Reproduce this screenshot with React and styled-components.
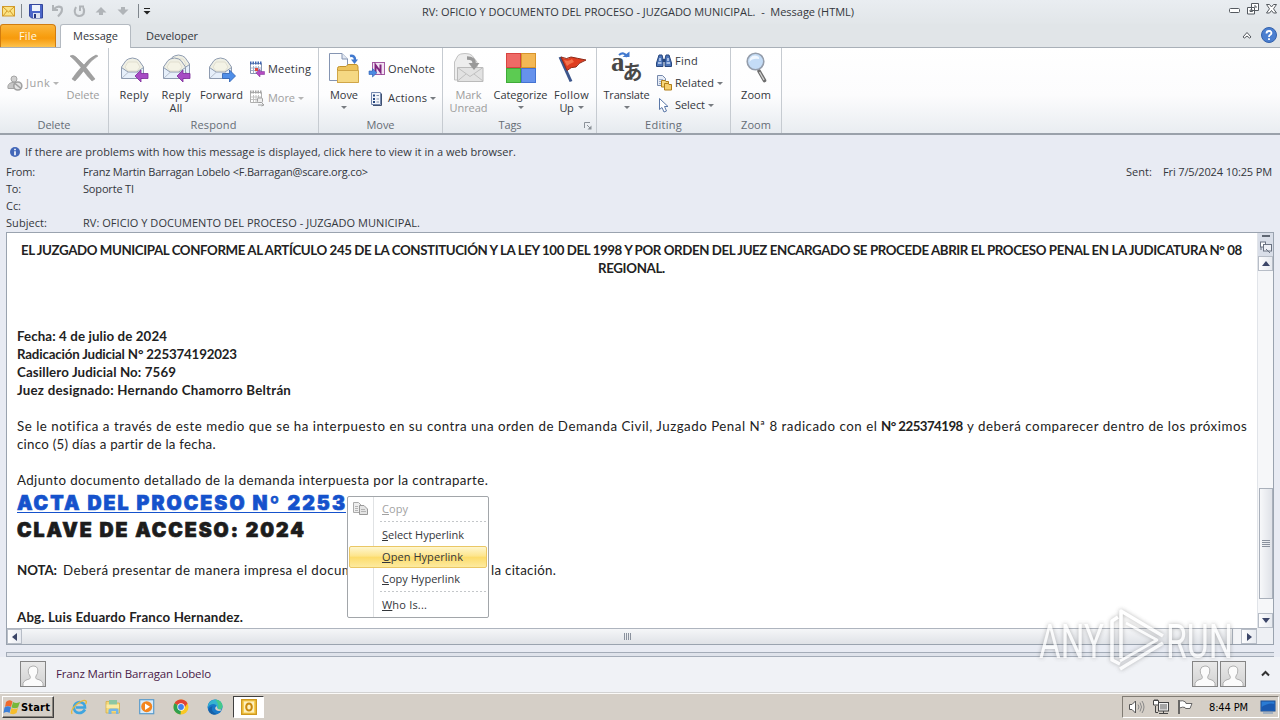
import React, { useLayoutEffect, useRef } from "react";
import styled, { createGlobalStyle } from "styled-components";

const Global = createGlobalStyle`
  * { box-sizing: border-box; }
  body { margin: 0; overflow: hidden; background: #e8ebf3; }
  body, button { font-family: "Open Sans", "Noto Sans", sans-serif; font-size: 11px; color: #34373c; }
  svg { display: block; flex: none; overflow: visible; }
`;

/* Text run whose tracking is computed so that it fills a given width */
const Run = styled.span`
  display: inline-block;
  flex: none;
  white-space: pre;
  width: ${(p) => p.$w}px;
  text-align: left;
`;
function Fit({ w, children }) {
  const ref = useRef(null);
  useLayoutEffect(() => {
    const el = ref.current;
    el.style.letterSpacing = "0px";
    const n = el.textContent.length - 0.5;
    const natural = el.getBoundingClientRect().width;
    el.style.letterSpacing = `${(w - natural) / n}px`;
  }, [w, children]);
  return (
    <Run $w={w}>
      <span ref={ref}>{children}</span>
    </Run>
  );
}

const Screen = styled.div`
  position: relative;
  width: 1280px;
  height: 720px;
  display: flex;
  flex-direction: column;
  overflow: hidden;
`;

/* ---------- title bar and tabs ---------- */
const TitleBar = styled.header`
  height: 24px;
  flex: none;
  display: grid;
  grid-template-columns: 422px 1fr auto;
  background: linear-gradient(#e9edf1, #e2e6e9);
  line-height: 23px;
`;
const QuickAccess = styled.div`
  display: flex;
  align-items: center;
  height: 22px;
  padding-left: 2px;
`;
const QuickIcon = styled.span`
  width: ${(p) => p.$w || 22}px;
`;
const Rule = styled.i`
  width: 1px;
  height: 14px;
  background: #7f868d;
  margin-right: ${(p) => p.$after}px;
`;
const WindowButtons = styled.div`
  display: flex;
  gap: 7px;
  height: 18px;
  align-items: center;
  padding-right: 3px;
`;
const TabRow = styled.nav`
  height: 24px;
  flex: none;
  display: flex;
  align-items: flex-end;
  background: #e1e5e8;
  border-bottom: 1px solid #a9b0b8;
`;
const FileTab = styled.div`
  width: 56px;
  height: 23px;
  border: 1px solid #d07c10;
  border-bottom: 0;
  border-radius: 3px 4px 0 0;
  background: linear-gradient(#fbb53c, #f8a115 45%, #f79a0c 60%, #fdc24c);
  color: #fff8e0;
  line-height: 21px;
  padding-left: 18px;
`;
const ActiveTab = styled.div`
  height: 24px;
  width: 71px;
  margin: 0 15px -1px 4px;
  padding-left: 12px;
  background: #fff;
  border: 1px solid #b4bac1;
  border-bottom: 0;
  border-radius: 3px 3px 0 0;
  line-height: 21px;
`;
const PlainTab = styled.div`
  line-height: 22px;
`;
const TabTools = styled.div`
  margin-left: auto;
  display: flex;
  align-items: center;
  gap: 9px;
  height: 24px;
  padding-right: 3px;
`;

/* ---------- ribbon ---------- */
const Ribbon = styled.section`
  height: 87px;
  flex: none;
  display: flex;
  background: linear-gradient(#fff, #fcfcfd 55%, #e9edf1);
  border-bottom: 2px solid #9aa1aa;
`;
const Group = styled.div`
  width: ${(p) => p.$w}px;
  display: flex;
  flex-direction: column;
  border-right: 1px solid #c6cbd1;
  background: linear-gradient(#fff, #fdfdfe 55%, #e6eaef);
`;
const Tools = styled.div`
  flex: 1;
  display: flex;
  padding-left: ${(p) => p.$pad || 0}px;
`;
const GroupLabel = styled.div`
  position: relative;
  height: 16px;
  line-height: 16px;
  color: #656c75;
  display: flex;
  justify-content: center;
`;
const Launcher = styled.svg`
  position: absolute;
  right: 4px;
  top: 5px;
`;
const Large = styled.div`
  width: ${(p) => p.$w}px;
  flex: none;
  display: flex;
  flex-direction: column;
  align-items: center;
  padding-top: 4px;
  line-height: 13px;
  color: ${(p) => (p.$off ? "#9c9c9c" : "#34373c")};
  & > svg { margin-bottom: 4px; }
`;
const LineTwo = styled.span`
  display: flex;
  align-items: center;
  gap: 4px;
  height: 13px;
`;
const SmallColumn = styled.div`
  display: flex;
  flex-direction: column;
  padding-top: ${(p) => p.$top}px;
  gap: ${(p) => p.$gap}px;
`;
const Small = styled.div`
  display: flex;
  align-items: center;
  height: 16px;
  line-height: 16px;
  gap: ${(p) => p.$gap || 3}px;
  color: ${(p) => (p.$off ? "#a0a0a0" : "#34373c")};
`;
const Arrow = styled.i`
  width: 0;
  height: 0;
  border: 3px solid transparent;
  border-bottom: 0;
  border-top-color: ${(p) => (p.$off ? "#b5b5b5" : "#777b80")};
`;

/* ---------- message header ---------- */
const Header = styled.section`
  height: 97px;
  flex: none;
  padding: 8px 8px 0 6px;
  background: #e8ebf3;
  line-height: 17px;
`;
const InfoBar = styled.div`
  display: flex;
  align-items: center;
  height: 17px;
  padding-left: 4px;
  gap: 5px;
  margin-bottom: 3px;
`;
const Field = styled.div`
  display: flex;
  height: 17px;
`;
const FieldName = styled.span`
  width: 77px;
`;
const Sent = styled.div`
  margin-left: auto;
  display: flex;
  gap: 11px;
`;

/* ---------- reading area ---------- */
const Frame = styled.main`
  position: relative;
  height: 413px;
  flex: none;
  margin: 0 6px;
  border: 1px solid #9aa3af;
  background: #fff;
  display: grid;
  grid-template-columns: 1fr 16px;
  grid-template-rows: 1fr 16px;
`;
const Letter = styled.article`
  padding: 8px 0 0 10px;
  font-family: Lato, "Open Sans", sans-serif;
  font-size: 13.3px;
  color: #222;
  line-height: 18px;
  overflow: hidden;
`;
const Line = styled.div`
  display: flex;
  height: 18px;
  margin-top: ${(p) => p.$mt || 0}px;
  padding-left: ${(p) => p.$in || 0}px;
  font-weight: ${(p) => (p.$b ? 700 : 400)};
`;
const Bold = styled.b`
  margin-right: ${(p) => p.$after || 0}px;
`;
const Headline = styled.div`
  width: max-content;
  height: 27px;
  line-height: 28px;
  font-family: Inter, "Liberation Sans", sans-serif;
  font-weight: 900;
  font-size: 19.5px;
  color: ${(p) => (p.$link ? "#1552cc" : "#1c1c1c")};
  -webkit-text-stroke: 0.7px currentColor;
`;
const LinkLine = styled.span`
  display: block;
  height: 24px;
  line-height: 28px;
  border-bottom: 1px solid #1552cc;
`;
const Gap = styled.span`
  width: ${(p) => p.$w}px;
`;
const VScroll = styled.div`
  display: flex;
  flex-direction: column;
  align-items: center;
  background: #f6f7f9;
  border-left: 1px solid #e1e4e9;
`;
const SplitHandle = styled.div`
  width: 15px;
  height: 23px;
  background: #d9dee8;
  display: flex;
  flex-direction: column;
  align-items: center;
  gap: 4px;
  padding-top: 2px;
`;
const ScrollButton = styled.div`
  width: ${(p) => p.$w || 15}px;
  height: 15px;
  border: 1px solid #b7bdc7;
  background: linear-gradient(90deg, #fdfdfe, #e7eaf0);
  display: grid;
  place-items: center;
`;
const VThumb = styled.div`
  width: 14px;
  height: 111px;
  margin-top: 217px;
  margin-bottom: auto;
  border: 1px solid #a9b0bb;
  background: linear-gradient(90deg, #f7f8fa, #dfe2e8);
  display: grid;
  place-items: center;
`;
const HScroll = styled.div`
  display: flex;
  border-top: 1px solid #aeb4be;
  background: #f3f4f7;
`;
const HThumb = styled.div`
  width: 1211px;
  margin-right: 8px;
  border-right: 1px solid #a9b0bb;
  background: linear-gradient(#f5f6f8, #dfe2e7);
  display: grid;
  place-items: center;
`;
const Corner = styled.div`
  background: #eef0f4;
`;
const Splitter = styled.div`
  height: 5px;
  flex: none;
  margin: 7px 6px 0;
  border: 1px solid #a4acb8;
  border-width: 1px 0 1px 1px;
  background: #dfe3eb;
`;

/* ---------- people pane ---------- */
const People = styled.section`
  height: 36px;
  flex: none;
  background: #f0f2f6;
  display: flex;
  align-items: center;
  padding: 0 10px 2px 20px;
  border-bottom: 1px solid #d2d2d2;
`;
const Avatar = styled.div`
  width: 26px;
  height: 26px;
  border: 1px solid #858585;
  background: linear-gradient(#e9e9e9, #d2d2d2);
  margin-right: ${(p) => p.$after}px;
`;
const PersonName = styled.span`
  color: #4a1a48;
  font-size: 11.5px;
  margin-right: auto;
`;

/* ---------- taskbar ---------- */
const Taskbar = styled.footer`
  flex: 1;
  background: #d5cfc7;
  border-top: 1px solid #fbfaf8;
  display: flex;
  align-items: center;
  padding-left: 2px;
`;
const StartButton = styled.div`
  width: 52px;
  height: 22px;
  border: 1px solid #fff;
  border-right-color: #404040;
  border-bottom-color: #404040;
  box-shadow: inset -1px -1px #8a857d;
  display: flex;
  align-items: center;
  gap: 1px;
  padding-left: 1px;
  color: #000;
  font: bold 11px "DejaVu Sans Condensed", "DejaVu Sans", sans-serif;
  margin-right: 17px;
`;
const Launch = styled.div`
  width: ${(p) => p.$w || 34}px;
`;
const RunningApp = styled.div`
  width: 31px;
  height: 22px;
  border: 1px solid #404040;
  border-right-color: #fff;
  border-bottom-color: #fff;
  background: #fff;
  display: grid;
  place-items: center;
`;
const Tray = styled.div`
  margin-left: auto;
  width: 157px;
  height: 22px;
  margin-right: 1px;
  border: 1px solid #817c74;
  border-right-color: #fff;
  border-bottom-color: #fff;
  display: flex;
  align-items: center;
  padding-left: 6px;
`;
const Clock = styled.span`
  color: #000;
  font: 11px "DejaVu Sans Condensed", "DejaVu Sans", sans-serif;
  margin: 0 12px 0 14px;
`;

/* ---------- context menu ---------- */
const Menu = styled.div`
  position: absolute;
  left: 347px;
  top: 496px;
  width: 142px;
  height: 122px;
  padding: 1px;
  border: 1px solid #a2a6aa;
  border-radius: 2px;
  background: linear-gradient(90deg, #fff 25px, #e0e2e4 25px, #e0e2e4 26px, #fff 26px);
`;
const MenuItem = styled.div`
  height: 22px;
  line-height: 20px;
  display: flex;
  align-items: center;
  padding-left: ${(p) => (p.$icon ? 3 : 32)}px;
  gap: 13px;
  border: 1px solid ${(p) => (p.$hot ? "#eac765" : "transparent")};
  border-radius: 2px;
  background: ${(p) => (p.$hot ? "linear-gradient(#fef6cf, #fde58c 45%, #fcdc6c 52%, #fdea9f)" : "none")};
  color: ${(p) => (p.$off ? "#a2a2a2" : "#33363a")};
`;
const MenuRule = styled.div`
  height: 4px;
  margin: 0 0 0 31px;
  background: repeating-linear-gradient(90deg, #c4c7ca 0 2px, transparent 2px 4px) 0 1px / 100% 1px no-repeat;
`;
const Watermark = styled.svg`
  position: absolute;
  left: 1030px;
  top: 603px;
  font-family: Roboto, sans-serif;
  font-size: 48px;
  fill: #fff;
  opacity: 0.75;
  filter: drop-shadow(0 0 2px rgba(80, 80, 80, 0.55));
`;

/* ---------- icons ---------- */
const I = ({ s = 16, w, h, children }) => (
  <svg width={w || s} height={h || s} viewBox={`0 0 ${w || s} ${h || s}`} fill="none">{children}</svg>
);
const Envelope = ({ x = 0, y = 0 }) => (
  <g transform={`translate(${x} ${y})`} stroke="#8e9bb0" strokeLinejoin="round">
    <path d="M1.500 12 L6 5.500 Q8 3.500 12.500 3 Q17 3.500 19 5.500 L23.500 12 V23.500 H1.500 Z" fill="#efefe4" />
    <path d="M1.500 12.500 L8 17 H17 L23.500 12.500 V23.500 H1.500 Z" fill="#e6effa" />
    <path d="M1.500 23.500 L8.500 17 M23.500 23.500 L16.500 17" stroke="#b6bfcc" />
    <path d="M5 12 L8 7 H17 L20 12 L17 16 H8Z" fill="#f4f3e6" stroke="#d6d4c2" strokeWidth=".6" />
  </g>
);
const Purple = ({ x = 0, y = 0 }) => (
  <path transform={`translate(${x} ${y})`} d="M0 6 L6 0 V3.500 H13 V8.500 H6 V12 Z" fill="#a74bc4" stroke="#7c2b99" strokeWidth=".8" />
);
const ReplyIcon = () => <I w={32} h={32}><Envelope x={2} y={3} /><Purple x={17} y={18} /></I>;
const ReplyAllIcon = () => <I w={32} h={32}><Envelope x={6} y={0} /><Envelope x={2} y={3} /><Purple x={17} y={18} /></I>;
const ForwardIcon = () => (
  <I w={32} h={32}><Envelope x={2} y={3} /><path d="M29.500 24 L23.500 18 V21.500 H16.500 V26.500 H23.500 V30 Z" fill="#4f8ee8" stroke="#2d5fb0" strokeWidth=".8" /></I>
);
const DeleteIcon = () => (
  <I w={32} h={32}>
    <path d="M3 4 Q6 2 9 5 L17 13 Q22 6 29 3 L31 4 Q24 8 19 15.500 Q24 22 28 27 L25 29 Q20 24 16.500 19 Q12 25 8 29 L5 27 Q9 21 14 15.500 Q8 8 3 4Z" fill="#a0a0a0" stroke="#8d8d8d" strokeWidth=".5" />
  </I>
);
const JunkIcon = () => (
  <I>
    <circle cx="7" cy="4" r="3" fill="#d0d0d0" stroke="#a5a5a5" /><path d="M1 13.500 Q0 8.500 5 7.500 H9 V13.500 Z" fill="#c6c6c6" stroke="#a5a5a5" />
    <circle cx="10.800" cy="11" r="4" fill="#e4e4e4" stroke="#a0a0a0" strokeWidth="1.600" /><path d="M8 8.500 L14 13.500" stroke="#a0a0a0" strokeWidth="1.600" />
  </I>
);
const CalendarIcon = ({ grey }) => (
  <I>
    <path d="M1.500 2.500 H12.500 V12.500 H1.500Z" fill="#fff" stroke={grey ? "#b0b0b0" : "#8796b2"} />
    <path d="M1 2 H13" stroke={grey ? "#a5a5a5" : "#3f65b0"} strokeWidth="3" strokeDasharray="1.500 1" />
    <path d="M2 7 H12 M2 9.500 H12 M4.500 5 V12 M7 5 V12 M9.500 5 V12" stroke={grey ? "#c2c2c2" : "#a5b0c8"} />
    {grey ? <><rect x="8.500" y="8" width="5" height="4.500" rx="1" fill="#eee" stroke="#a0a0a0" /><path d="M9 15 H14 M12.500 12.500 L15 15 L12.500 16" stroke="#a0a0a0" /></>
      : <><rect x="6" y="7" width="3" height="3" fill="#e0483c" /><path d="M7 12 L11 8 V10.500 H15.500 V13.500 H11 V16Z" fill="#b54ac0" stroke="#7c2b99" strokeWidth=".5" /></>}
  </I>
);
const MoveIcon = () => (
  <I w={32} h={32}>
    <path d="M1.500 1.500 H14 L19.500 7 V28.500 H1.500Z" fill="#fbfcfe" stroke="#8494b2" /><path d="M14 1.500 V7 H19.500" fill="#e2e8f2" stroke="#8494b2" />
    <path d="M22 4 Q27 3 27 8" stroke="#4179cf" strokeWidth="2.500" /><path d="M23 7.500 H30 L26.500 12Z" fill="#4179cf" />
    <path d="M9.500 16.500 Q9.500 14.500 11.500 14.500 H18 L20 12.500 H28 Q30 12.500 30 15 V30.500 H9.500Z" fill="#edc35c" stroke="#c2922b" />
    <path d="M9.500 18.500 H30.500 V30.500 H9.500Z" fill="#f5d883" stroke="#d0a648" />
  </I>
);
const OneNoteIcon = () => (
  <I>
    <rect x="3.500" y="1.500" width="12" height="12" fill="#f3e2f3" stroke="#a45aa2" /><path d="M6.500 11.500 V4 L11.500 11 V3.500" stroke="#80247e" strokeWidth="2" />
    <path d="M0 10 H3.500 V7.500 L8 11.700 L3.500 16 V13.500 H0Z" fill="#4d8be2" stroke="#2b5eb0" strokeWidth=".6" />
  </I>
);
const ActionsIcon = () => (
  <I>
    <path d="M2.500 2.500 H11.500 V14.500 H2.500Z" fill="#f2f5fa" stroke="#7488ad" /><path d="M12.500 3.500 V15.500 H4" stroke="#3f5071" />
    <path d="M4 5.500 H6 M4 9 H6 M4 12 H6" stroke="#26477f" strokeWidth="2" /><path d="M7.500 5.500 H10 M7.500 9 H10 M7.500 12 H10" stroke="#8291ab" />
  </I>
);
const MarkIcon = () => (
  <I w={32} h={32}>
    <path d="M1.500 28 V10 L5 3.500 Q7 1.500 12 1.500 Q17 1.500 19 3.500 L24 10 V28Z" fill="#ededed" stroke="#c2c2c2" />
    <path d="M4.500 15.500 H30 V29.500 H4.500Z" fill="#e2e2e2" stroke="#bababa" /><path d="M4.500 15.500 L17 24.500 L30 15.500 M4.500 29 L13 22 M30 29 L21 22" stroke="#c0c0c0" />
    <path d="M14 6 Q22 6 21 12" stroke="#999" strokeWidth="3.500" /><path d="M15.500 11 H26.500 L21 18Z" fill="#999" />
  </I>
);
const CategorizeIcon = () => (
  <I w={32} h={32}>
    <rect x="1.500" y="1.500" width="14" height="14" fill="#ee6a66" stroke="#d84440" /><rect x="16.500" y="1.500" width="14" height="14" fill="#f3b855" stroke="#d8942b" />
    <rect x="1.500" y="16.500" width="14" height="14" fill="#5ccb52" stroke="#3faa38" /><rect x="16.500" y="16.500" width="14" height="14" fill="#6692ec" stroke="#4473d2" />
  </I>
);
const FlagIcon = () => (
  <I w={32} h={32}>
    <path d="M4 5 L15 29.500" stroke="#3c568c" strokeWidth="3" />
    <path d="M5 5 Q11 8 15 5 Q20 6 30 8 Q22 11 20 15 Q15 14.500 11 18.500Z" fill="#df3d20" stroke="#8e2a18" />
    <path d="M8 8 Q13 10 16 7 L18 10 Q13 12 11 14Z" fill="#f4724c" />
  </I>
);
const GlyphText = styled.text`
  font-family: ${(p) => (p.$jp ? '"Noto Sans CJK JP", sans-serif' : '"Liberation Serif", serif')};
  font-size: ${(p) => (p.$jp ? 20 : 27)}px;
  font-weight: 700;
  fill: #484848;
`;
const TranslateIcon = () => (
  <I w={32} h={32}>
    <GlyphText x="0" y="19">a</GlyphText><GlyphText $jp x="11.500" y="27.500">あ</GlyphText>
    <path d="M8 3 Q13 -1 16 5" stroke="#4179cf" strokeWidth="2.200" /><path d="M11.500 5 H18.500 V-.5 Z" fill="#4179cf" />
  </I>
);
const FindIcon = () => (
  <I>
    <path d="M3 2 H6 L7 6 V13.500 H.5 V10 Z M13 2 H10 L9 6 V13.500 H15.500 V10Z" fill="#4c74b8" stroke="#27467d" /><path d="M6.500 6 H9.500 V9 H6.500Z" fill="#27467d" />
    <path d="M2 10 H5.500 M10.500 10 H14 M4 5 V8 M12 5 V8" stroke="#c5d8f5" strokeWidth="1.500" />
  </I>
);
const RelatedIcon = () => (
  <I>
    <path d="M1.500 .5 H6.500 L9.500 3.500 V10.500 H1.500Z" fill="#e6ecf6" stroke="#7588ab" /><path d="M3 4.500 H7 M3 6.500 H7 M3 8.500 H7" stroke="#9aabca" />
    <path d="M5.500 5.500 H9 L10 6.500 H12.500 V12 H5.500Z" fill="#f6d67a" stroke="#b17e18" /><path d="M8.500 8.500 H12 L13 9.500 H15.500 V15 H8.500Z" fill="#f6cf6e" stroke="#b17e18" />
  </I>
);
const SelectIcon = () => <I><path d="M3.500 1.500 V12.500 L6 10.500 L8 15 L10.500 14 L8.500 9.500 L12 9.500Z" fill="#fff" stroke="#5b78a8" /></I>;
const ZoomIcon = () => (
  <I w={32} h={32}>
    <path d="M19 19 L24.500 28.500" stroke="#6e6e6e" strokeWidth="3.600" strokeLinecap="round" /><path d="M19.500 20 L24 28" stroke="#d5d5d5" strokeWidth="1.300" />
    <circle cx="15.500" cy="9.500" r="8.300" fill="#c4dcf6" stroke="#949dab" strokeWidth="1.600" /><path d="M9.500 10 Q9 4 15 3.500 Q20 4 19 7 Q12 6 9.500 10Z" fill="#f0f7ff" />
  </I>
);
const Person = () => (
  <I w={24} h={24}><path d="M2 24 V21.500 Q3 18 8.500 17 Q10 16 9 14 Q7 12 7.200 8 Q8 4 12 4 Q16.500 4 16.800 8 Q17 12 15 14 Q14 16 15.500 17 Q21 18 22 21.500 V24" fill="#fbfbfb" stroke="#a9a9a9" strokeWidth=".9" /></I>
);

const titleText = "RV: OFICIO Y DOCUMENTO DEL PROCESO - JUZGADO MUNICIPAL.  -  Message (HTML)";

export default function App() {
  return (
    <Screen>
      <Global />
      <TitleBar>
        <QuickAccess>
          <QuickIcon $w={19}><I w={14} h={14}><rect x=".5" y="2.500" width="12" height="9.500" fill="#fbe384" stroke="#d29a2a" /><path d="M1 3 L6.500 8 L12 3 M1 12 L5 7 M12 12 L8 7" stroke="#d29a2a" /></I></QuickIcon>
          <Rule $after={7} />
          <QuickIcon><I w={15} h={15}><path d="M.5 .5 H13.500 V14 H2.500 L.5 12Z" fill="#4b66c8" stroke="#34479c" /><rect x="3" y="1" width="8" height="6" fill="#eef3fb" /><rect x="4" y="9" width="7" height="5" fill="#dde4f2" /><rect x="5" y="10" width="2" height="4" fill="#26377f" /></I></QuickIcon>
          <QuickIcon><I w={14} h={14}><path d="M2 1 V6 H7" stroke="#b0b4b8" strokeWidth="2" /><path d="M3 5 Q7 1 10.500 3.500 Q12.500 7 7 12.500" stroke="#b0b4b8" strokeWidth="2.200" /></I></QuickIcon>
          <QuickIcon><I w={14} h={14}><path d="M3 3 Q0 9 4 11.500 Q8 13 10.500 10 Q12 6 10 3.500 M7 7 V2.500 H11" stroke="#b0b4b8" strokeWidth="2" /></I></QuickIcon>
          <QuickIcon><I w={12} h={12}><path d="M6 2 L11.500 7.500 H8 V10 H4 V7.500 H.5Z" fill="#b0b4b8" /></I></QuickIcon>
          <QuickIcon $w={21}><I w={12} h={12}><path d="M6 10 L11.500 4.500 H8 V2 H4 V4.500 H.5Z" fill="#b0b4b8" /></I></QuickIcon>
          <Rule $after={4} />
          <I w={8} h={8}><path d="M1 1.500 H7" stroke="#222" /><path d="M.5 4 H7.500 L4 7.500Z" fill="#222" /></I>
        </QuickAccess>
        <Fit w={432}>{titleText}</Fit>
        <WindowButtons>
          <I w={11} h={12}><rect x=".5" y="5.500" width="10" height="4" rx="1" stroke="#555a60" fill="#fff" /></I>
          <I w={12} h={12}><path d="M4.500 .5 H11.500 V7.500 H4.500Z M.5 4.500 H7.500 V11 H.5Z" stroke="#555a60" fill="#fff" /><path d="M3 7 H5.500 V8.500 H3Z M7 3 H9 V5" stroke="#555a60" /></I>
          <I w={11} h={12}><path d="M.5 1.500 H3.500 L5.500 4 L7.500 1.500 H10.500 L7.500 5.800 L10.500 10 H7.500 L5.500 7.500 L3.500 10 H.5 L3.500 5.800Z" stroke="#555a60" fill="#fff" /></I>
        </WindowButtons>
      </TitleBar>
      <TabRow>
        <FileTab><Fit w={18}>File</Fit></FileTab>
        <ActiveTab><Fit w={45}>Message</Fit></ActiveTab>
        <PlainTab><Fit w={52}>Developer</Fit></PlainTab>
        <TabTools>
          <I w={10} h={10}><path d="M1 7 L5 2.500 L9 7 L7.500 8 L5 6 L2.500 8Z" stroke="#50555b" fill="#fff" /></I>
          <I w={16} h={16}><circle cx="8" cy="8" r="7.500" fill="#4b7fd0" stroke="#3462ac" /><path d="M5.500 6.500 Q5.500 4 8 4 Q10.500 4 10.500 6 Q10.500 7 9 8 Q8 8.500 8 10 M8 11.300 V13" stroke="#fff" strokeWidth="1.800" /></I>
        </TabTools>
      </TabRow>
      <Ribbon>
        <Group $w={109}>
          <Tools $pad={7}>
            <SmallColumn $top={27}><Small $off $gap={3}><JunkIcon /><Fit w={24}>Junk</Fit><Arrow $off /></Small></SmallColumn>
            <Gap $w={5} />
            <Large $w={38} $off><DeleteIcon /><Fit w={33}>Delete</Fit></Large>
          </Tools>
          <GroupLabel><Fit w={33}>Delete</Fit></GroupLabel>
        </Group>
        <Group $w={210}>
          <Tools $pad={4}>
            <Large $w={42}><ReplyIcon /><Fit w={29}>Reply</Fit></Large>
            <Large $w={42}><ReplyAllIcon /><Fit w={29}>Reply</Fit><LineTwo><Fit w={13}>All</Fit></LineTwo></Large>
            <Large $w={49}><ForwardIcon /><Fit w={43}>Forward</Fit></Large>
            <Gap $w={3} />
            <SmallColumn $top={13} $gap={13}>
              <Small><CalendarIcon /><Fit w={43}>Meeting</Fit></Small>
              <Small $off><CalendarIcon grey /><Fit w={27}>More</Fit><Arrow $off /></Small>
            </SmallColumn>
          </Tools>
          <GroupLabel><Fit w={46}>Respond</Fit></GroupLabel>
        </Group>
        <Group $w={124}>
          <Tools $pad={4}>
            <Large $w={42}><MoveIcon /><Fit w={28}>Move</Fit><LineTwo><Arrow /></LineTwo></Large>
            <Gap $w={4} />
            <SmallColumn $top={13} $gap={13}>
              <Small><OneNoteIcon /><Fit w={47}>OneNote</Fit></Small>
              <Small><ActionsIcon /><Fit w={39}>Actions</Fit><Arrow /></Small>
            </SmallColumn>
          </Tools>
          <GroupLabel><Fit w={28}>Move</Fit></GroupLabel>
        </Group>
        <Group $w={154}>
          <Tools $pad={3}>
            <Large $w={45} $off><MarkIcon /><Fit w={26}>Mark</Fit><LineTwo><Fit w={38}>Unread</Fit></LineTwo></Large>
            <Large $w={59}><CategorizeIcon /><Fit w={54}>Categorize</Fit><LineTwo><Arrow /></LineTwo></Large>
            <Large $w={43}><FlagIcon /><Fit w={35}>Follow</Fit><LineTwo><Fit w={14}>Up</Fit><Arrow /></LineTwo></Large>
          </Tools>
          <GroupLabel>
            <Fit w={23}>Tags</Fit><Gap $w={19} />
            <Launcher width="8" height="8" viewBox="0 0 8 8" fill="none"><path d="M.5 6 V.5 H6" stroke="#8b9198" /><path d="M3 3 L6 6" stroke="#8b9198" /><path d="M7.500 3.500 V7.500 H3.500Z" fill="#8b9198" /></Launcher>
          </GroupLabel>
        </Group>
        <Group $w={134}>
          <Tools $pad={5}>
            <Large $w={49}><TranslateIcon /><Fit w={46}>Translate</Fit><LineTwo><Arrow /></LineTwo></Large>
            <Gap $w={5} />
            <SmallColumn $top={5} $gap={6}>
              <Small><FindIcon /><Fit w={23}>Find</Fit></Small>
              <Small><RelatedIcon /><Fit w={39}>Related</Fit><Arrow /></Small>
              <Small><SelectIcon /><Fit w={30}>Select</Fit><Arrow /></Small>
            </SmallColumn>
          </Tools>
          <GroupLabel><Fit w={37}>Editing</Fit></GroupLabel>
        </Group>
        <Group $w={51}>
          <Tools><Large $w={50}><ZoomIcon /><Fit w={30}>Zoom</Fit></Large></Tools>
          <GroupLabel><Fit w={30}>Zoom</Fit></GroupLabel>
        </Group>
      </Ribbon>

      <Header>
        <InfoBar>
          <I w={10} h={10}><circle cx="5" cy="5" r="5" fill="#4267b8" /><path d="M5 1.800 V3.300 M5 4.300 V8.300" stroke="#fff" strokeWidth="1.600" /></I>
          <Fit w={491}>If there are problems with how this message is displayed, click here to view it in a web browser.</Fit>
        </InfoBar>
        <Field>
          <FieldName><Fit w={29}>From:</Fit></FieldName>
          <Fit w={285}>{"Franz Martin Barragan Lobelo <F.Barragan@scare.org.co>"}</Fit>
          <Sent><Fit w={26}>Sent:</Fit><Fit w={109}>Fri 7/5/2024 10:25 PM</Fit></Sent>
        </Field>
        <Field><FieldName><Fit w={15}>To:</Fit></FieldName><Fit w={51}>Soporte TI</Fit></Field>
        <Field><FieldName><Fit w={15}>Cc:</Fit></FieldName></Field>
        <Field><FieldName><Fit w={41}>Subject:</Fit></FieldName><Fit w={337}>RV: OFICIO Y DOCUMENTO DEL PROCESO - JUZGADO MUNICIPAL.</Fit></Field>
      </Header>

      <Frame>
        <Letter>
          <Line $b $in={4}><Fit w={1221}>EL JUZGADO MUNICIPAL CONFORME AL ARTÍCULO 245 DE LA CONSTITUCIÓN Y LA LEY 100 DEL 1998 Y POR ORDEN DEL JUEZ ENCARGADO SE PROCEDE ABRIR EL PROCESO PENAL EN LA JUDICATURA N° 08</Fit></Line>
          <Line $b $in={581}><Fit w={67}>REGIONAL.</Fit></Line>
          <Line $b $mt={50}><Fit w={150}>Fecha: 4 de julio de 2024</Fit></Line>
          <Line $b><Fit w={220}>Radicación Judicial N° 225374192023</Fit></Line>
          <Line $b><Fit w={159}>Casillero Judicial No: 7569</Fit></Line>
          <Line $b><Fit w={274}>Juez designado: Hernando Chamorro Beltrán</Fit></Line>
          <Line $mt={18}>
            <Fit w={864}>{"Se le notifica a través de este medio que se ha interpuesto en su contra una orden de Demanda Civil, Juzgado Penal Nª 8 radicado con el "}</Fit>
            <Bold $after={4}><Fit w={82}>N° 225374198</Fit></Bold>
            <Fit w={280}>y deberá comparecer dentro de los próximos</Fit>
          </Line>
          <Line><Fit w={199}>cinco (5) días a partir de la fecha.</Fit></Line>
          <Line $mt={18}><Fit w={471}>Adjunto documento detallado de la demanda interpuesta por la contraparte.</Fit></Line>
          <Headline $link><LinkLine><Fit w={329}>ACTA DEL PROCESO Nº 2253</Fit></LinkLine></Headline>
          <Headline><Fit w={288}>CLAVE DE ACCESO: 2024</Fit></Headline>
          <Line $mt={18}>
            <Bold $after={6}><Fit w={40}>NOTA:</Fit></Bold>
            <Fit w={290}>Deberá presentar de manera impresa el docum</Fit>
            <Gap $w={138} />
            <Fit w={65}>la citación.</Fit>
          </Line>
          <Line $b $mt={29}><Fit w={226}>Abg. Luis Eduardo Franco Hernandez.</Fit></Line>
        </Letter>
        <VScroll>
          <SplitHandle>
            <I w={8} h={2}><path d="M0 1 H8" stroke="#5f6672" strokeWidth="2" /></I>
            <I w={13} h={12}><rect x="1.500" y="1" width="5" height="5" stroke="#6b7382" fill="#fff" /><rect x="4.500" y="3.500" width="8" height="6.500" stroke="#6b7382" fill="#eef0f5" /><path d="M2 6 V9 M7 8 L11 12" stroke="#6b7382" /></I>
          </SplitHandle>
          <ScrollButton><I w={8} h={5}><path d="M0 5 L4 0 L8 5Z" fill="#3b4568" /></I></ScrollButton>
          <VThumb><I w={8} h={7}><path d="M0 .5 H8 M0 2.500 H8 M0 4.500 H8 M0 6.500 H8" stroke="#8a919d" /></I></VThumb>
          <ScrollButton><I w={8} h={5}><path d="M0 0 L4 5 L8 0Z" fill="#3b4568" /></I></ScrollButton>
        </VScroll>
        <HScroll>
          <ScrollButton><I w={5} h={8}><path d="M5 0 L0 4 L5 8Z" fill="#3b4568" /></I></ScrollButton>
          <HThumb><I w={7} h={7}><path d="M.5 0 V7 M2.500 0 V7 M4.500 0 V7 M6.500 0 V7" stroke="#8a919d" /></I></HThumb>
          <ScrollButton $w={16}><I w={5} h={8}><path d="M0 0 L5 4 L0 8Z" fill="#3b4568" /></I></ScrollButton>
        </HScroll>
        <Corner />
      </Frame>
      <Splitter />

      <People>
        <Avatar $after={10}><Person /></Avatar>
        <PersonName><Fit w={155}>Franz Martin Barragan Lobelo</Fit></PersonName>
        <Avatar $after={2}><Person /></Avatar>
        <Avatar $after={15}><Person /></Avatar>
        <I w={9} h={7}><path d="M1 5.500 L4.500 2 L8 5.500" stroke="#333" strokeWidth="2" /></I>
      </People>

      <Taskbar>
        <StartButton>
          <I><path d="M2 3 Q5 0 8.500 2.500 L7 8 Q4 6 1 8Z" fill="#ee6a2e" /><path d="M9 3 Q12 5 16 3 L14 8.500 Q11 10 7.500 8.500Z" fill="#76b83a" /><path d="M.5 8.500 Q4 6 7 8.500 L5.500 14 Q3 12 -.5 14Z" fill="#3c7fd8" /><path d="M7.500 9 Q11 11 14 9 L12.500 14 Q10 16 6 14.500Z" fill="#f6bd2c" /></I>
          <Fit w={29}>Start</Fit>
        </StartButton>
        <Launch><I><path d="M14 10.500 Q12 14 8 14 Q3 13.500 3 8.500 Q3.500 3.500 8.500 3 Q14 3.500 14 8.500 H5" stroke="#3fa5df" strokeWidth="2.600" /><path d="M1 15 Q-1 11 6 5 Q13 0 15 2 Q16 3 14.500 5" stroke="#e8b93a" strokeWidth="1.300" /></I></Launch>
        <Launch><I><path d="M1 2.500 H6 L7 4 H14.500 V14 H1Z" fill="#f4d878" stroke="#d6b04a" strokeWidth=".8" /><path d="M4 1 H12 V6 H4Z" fill="#8cc7a3" /><path d="M1.500 5.500 H14 V9 H1.500Z" fill="#fbeaa2" /><path d="M3.500 15 V11 Q3.500 9.500 5.500 9.500 H12 Q13.500 9.500 13.500 11 V15 H11 V12 H6.500 V15Z" fill="#73b5e8" /></I></Launch>
        <Launch><I><rect x=".7" y=".7" width="14" height="14" fill="#d8ebfa" stroke="#5b9ccc" strokeWidth="1.200" /><circle cx="7.700" cy="7.700" r="5.500" fill="#f3851f" /><path d="M6 4.500 L11 7.700 L6 11Z" fill="#fff" /></I></Launch>
        <Launch><I><circle cx="8" cy="8" r="7.500" fill="#f9c823" /><path d="M8 8 L1.500 4.250 A7.500 7.500 0 0 1 14.500 4.250Z" fill="#e04336" /><path d="M8 8 L1.500 4.250 A7.500 7.500 0 0 0 7.500 15.500Z" fill="#2fa04f" /><path d="M8 4.300 H14.500 L12 8Z" fill="#e04336" /><circle cx="8" cy="8" r="3.700" fill="#fff" /><circle cx="8" cy="8" r="2.900" fill="#4081ec" /></I></Launch>
        <Launch $w={26}><I><circle cx="8" cy="8" r="7.500" fill="#1878c8" /><path d="M.6 9 Q1 1 8.500 .5 Q15 1 15.500 7.500 Q15 11 10.500 11 Q9 10.500 10 9 Q10 5 6 5 Q2 5.500 .6 9Z" fill="#35b4d0" /><path d="M8.500 .5 Q15 1 15.500 7.500 Q15 11 10.500 11 Q13 7 8.500 .5Z" fill="#45c98b" /><path d="M5.500 7 Q3 13 10 15 Q5 17 2 13 Q0 9 5.500 7Z" fill="#1560a8" /><path d="M9.700 7 Q7 9 9 11 Q12 13 15 11 L14 10.500 Q10 11 9.700 7Z" fill="#d5cfc7" /></I></Launch>
        <RunningApp><I><rect x=".7" y=".7" width="14.600" height="14.600" fill="#f8cf54" stroke="#cf981d" strokeWidth="1.400" /><rect x="3" y="2.500" width="10" height="11" fill="#fdf0c0" /><ellipse cx="8" cy="8" rx="2.800" ry="3.600" stroke="#c98a10" strokeWidth="2" /></I></RunningApp>
        <Tray>
          <Launch $w={24}><I><path d="M.5 5.500 H3 L6.500 2 V14 L3 10.500 H.5Z" fill="#fff" stroke="#555" /><path d="M9 5.500 Q11 8 9 10.500 M11 3.500 Q14 8 11 12.500 M13 2 Q17 8 13 14" stroke="#888" /></I></Launch>
          <Launch $w={24}><I><rect x="5.500" y="3.500" width="10" height="8.500" fill="#f2f2f2" stroke="#444" /><rect x="7" y="5" width="7" height="5.500" fill="#a5a5a5" /><path d="M6 14.500 H15 M10.500 12 V14 M2.500 7 V13.500 H5" stroke="#444" /><path d="M.5 1.500 H5.500 V6 H.5Z M2 0 V2 M4 0 V2" fill="#fff" stroke="#444" /></I></Launch>
          <Launch $w={18}><I><path d="M2 1 V15" stroke="#444" strokeWidth="1.500" /><path d="M2.500 2 Q6 1 8.500 3 L9 4.500 H15 L13 9.500 H8.500 L8 8.500 Q6 7.500 2.500 9Z" fill="#fff" stroke="#666" /></I></Launch>
          <Clock><Fit w={39}>8:44 PM</Fit></Clock>
          <I w={17} h={14}><rect x="1" y="1" width="14" height="10" fill="#2a7bd4" stroke="#1b4d92" /><path d="M1.500 7 Q9 2 14.500 4 V10.500 H1.500Z" fill="#1a59b0" /><path d="M3 13 H13" stroke="#8fa6bf" strokeWidth="1.500" /></I>
        </Tray>
      </Taskbar>

      <Menu>
        <MenuItem $off $icon><I w={16} h={16}><path d="M.5 1.500 H5.500 L8 4 V11.500 H.5Z" fill="#eee" stroke="#aaa" /><path d="M6.500 4.500 H11 L14.500 8 V13.500 H6.500Z" fill="#e4e4e4" stroke="#999" /><path d="M2 5.500 H5 M2 7.500 H5 M2 9.500 H5 M8 8.500 H12 M8 10.500 H13" stroke="#b4b4b4" /></I><Fit w={26}><u>C</u>opy</Fit></MenuItem>
        <MenuRule />
        <MenuItem><Fit w={82}><u>S</u>elect Hyperlink</Fit></MenuItem>
        <MenuItem $hot><Fit w={81}><u>O</u>pen Hyperlink</Fit></MenuItem>
        <MenuItem><Fit w={78}><u>C</u>opy Hyperlink</Fit></MenuItem>
        <MenuRule />
        <MenuItem><Fit w={45}><u>W</u>ho Is...</Fit></MenuItem>
      </Menu>

      <Watermark width="212" height="76" viewBox="0 0 212 76">
        <text x="9" y="55" textLength="65" lengthAdjust="spacingAndGlyphs">ANY</text>
        <text x="136" y="55" textLength="67" lengthAdjust="spacingAndGlyphs">RUN</text>
        <g fill="none" stroke="#fff" strokeWidth="3.600" strokeLinejoin="round">
          <path d="M91 55 V8 L133 33" />
          <path d="M88 14 L82 18 V57 L90 61" />
          <path d="M90 66 L133 40" />
          <path d="M96 20 L127 37 L90 58" strokeWidth="2.600" />
        </g>
      </Watermark>
    </Screen>
  );
}
